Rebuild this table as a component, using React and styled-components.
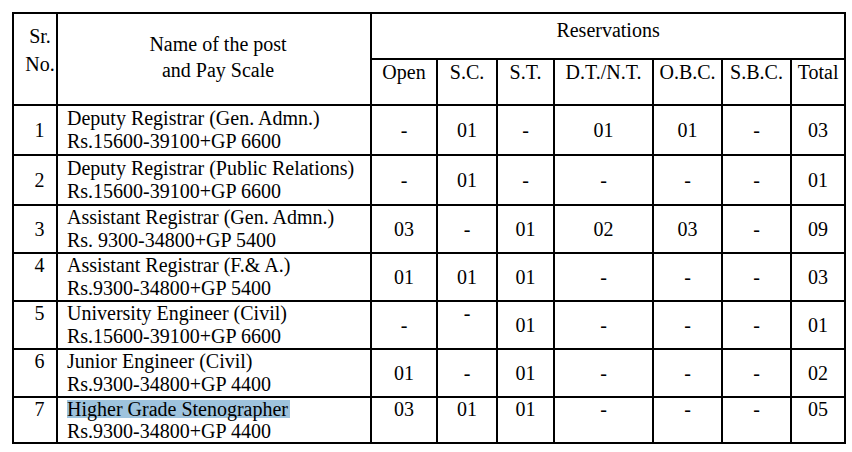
import React from "react";
import styled, { createGlobalStyle } from "styled-components";

const GlobalStyle = createGlobalStyle`
	html, body {
		margin: 0;
		padding: 0;
		background: #ffffff;
	}
	body {
		font-family: "Liberation Serif", "Times New Roman", serif;
		color: #000000;
	}
`;

const Page = styled.div`
	padding: 12px 0 0 12px;
`;

const Table = styled.table`
	border-collapse: collapse;
	table-layout: fixed;
	width: 834px;
	font-size: 20px;
	line-height: 23px;
`;

const Row = styled.tr`
	height: ${(props) => props.h}px;
	line-height: ${(props) => (props.tight ? "22px" : "23px")};
`;

const Cell = styled.td`
	border: 2px solid #000;
	padding: 0;
	text-align: center;
	vertical-align: ${(props) => (props.top ? "top" : "middle")};
	white-space: nowrap;
`;

const SrCell = styled(Cell)`
	padding-left: 9px;
`;

const NameCell = styled(Cell)`
	text-align: left;
	padding-left: 9px;
	vertical-align: middle;
`;

const HeadCell = styled.th`
	border: 2px solid #000;
	font-weight: normal;
	text-align: center;
	vertical-align: top;
	white-space: nowrap;
	padding: 0;
	line-height: 24px;
`;

const SrHead = styled(HeadCell)`
	line-height: 28px;
	padding: 8px 0 0 10px;
`;

const NameHead = styled(HeadCell)`
	line-height: 26px;
	vertical-align: middle;
	padding: 0 0 4px 8px;
`;

const GroupHead = styled(HeadCell)`
	padding-top: 4px;
`;

const Highlight = styled.span`
	background: linear-gradient(
		transparent 2px,
		#9ec3dd 2px,
		#9ec3dd 20px,
		transparent 20px
	);
	padding-right: 2px;
`;

const widths = [44, 314, 66, 60, 57, 99, 69, 69, 54];
const subHeads = ["Open", "S.C.", "S.T.", "D.T./N.T.", "O.B.C.", "S.B.C.", "Total"];

const rows = [
	{ sr: "1", post: "Deputy Registrar (Gen. Admn.)", pay: "Rs.15600-39100+GP 6600", vals: ["-", "01", "-", "01", "01", "-", "03"], h: 50 },
	{ sr: "2", post: "Deputy Registrar (Public Relations)", pay: "Rs.15600-39100+GP 6600", vals: ["-", "01", "-", "-", "-", "-", "01"], h: 50 },
	{ sr: "3", post: "Assistant Registrar (Gen. Admn.)", pay: "Rs. 9300-34800+GP 5400", vals: ["03", "-", "01", "02", "03", "-", "09"], h: 48 },
	{ sr: "4", post: "Assistant Registrar (F.& A.)", pay: "Rs.9300-34800+GP 5400", vals: ["01", "01", "01", "-", "-", "-", "03"], h: 48, srTop: true },
	{ sr: "5", post: "University Engineer (Civil)", pay: "Rs.15600-39100+GP 6600", vals: ["-", "-", "01", "-", "-", "-", "01"], h: 48, srTop: true, topCols: [1] },
	{ sr: "6", post: "Junior Engineer (Civil)", pay: "Rs.9300-34800+GP 4400", vals: ["01", "-", "01", "-", "-", "-", "02"], h: 48, srTop: true },
	{ sr: "7", post: "Higher Grade Stenographer", pay: "Rs.9300-34800+GP 4400", vals: ["03", "01", "01", "-", "-", "-", "05"], h: 46, tight: true, srTop: true, allTop: true, marked: true },
];

const App = () => {
	return (
		<Page>
			<GlobalStyle />
			<Table>
				<colgroup>
					{widths.map((w, i) => (
						<col key={i} style={{ width: w }} />
					))}
				</colgroup>
				<thead>
					<Row h={46}>
						<SrHead rowSpan={2}>
							Sr.
							<br />
							No.
						</SrHead>
						<NameHead rowSpan={2}>
							Name of the post
							<br />
							and Pay Scale
						</NameHead>
						<GroupHead colSpan={7}>Reservations</GroupHead>
					</Row>
					<Row h={46}>
						{subHeads.map((s) => (
							<HeadCell key={s}>{s}</HeadCell>
						))}
					</Row>
				</thead>
				<tbody>
					{rows.map((r) => (
						<Row key={r.sr} h={r.h} tight={r.tight}>
							<SrCell top={r.srTop}>{r.sr}</SrCell>
							<NameCell>
								{r.marked ? <Highlight>{r.post}</Highlight> : r.post}
								<br />
								{r.pay}
							</NameCell>
							{r.vals.map((v, i) => (
								<Cell key={i} top={r.allTop || (r.topCols && r.topCols.includes(i))}>
									{v}
								</Cell>
							))}
						</Row>
					))}
				</tbody>
			</Table>
		</Page>
	);
};

export default App;
